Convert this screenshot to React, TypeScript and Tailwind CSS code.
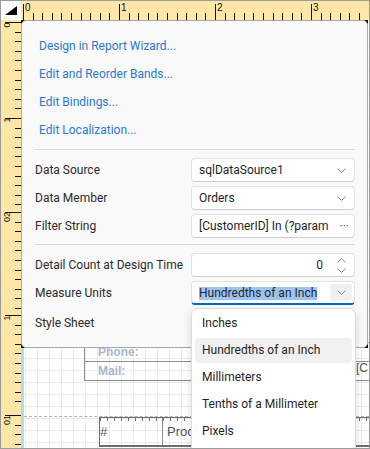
import React from "react";

const links = [
  "Design in Report Wizard...",
  "Edit and Reorder Bands...",
  "Edit Bindings...",
  "Edit Localization...",
];

const units = ["Inches", "Hundredths of an Inch", "Millimeters", "Tenths of a Millimeter", "Pixels"];

function Chevron({ up = false }: { up?: boolean }) {
  return (
    <svg width="9" height="5" viewBox="0 0 9 5" className="block">
      <path
        d={up ? "M0.5 4.5 L4.5 0.5 L8.5 4.5" : "M0.5 0.5 L4.5 4.5 L8.5 0.5"}
        fill="none"
        stroke="#8a8a8a"
        strokeWidth="1"
      />
    </svg>
  );
}

function TopRuler() {
  const ticks = Array.from({ length: 37 }, (_, i) => i);
  return (
    <svg width="348" height="19" className="block">
      {ticks.map((i) => {
        const x = Math.round(2 + i * 9.6) + 0.5;
        const major = i % 10 === 0;
        return <line key={i} x1={x} x2={x} y1={major ? 3 : 12} y2={19} stroke="#111" strokeWidth="1" />;
      })}
      {[0, 1, 2, 3].map((n) => (
        <text key={n} x={Math.round(2 + n * 96) + 2} y={9.5} fontSize="10" fontFamily="Liberation Sans, sans-serif" fill="#111">
          {n}
        </text>
      ))}
    </svg>
  );
}

function LeftRuler() {
  const majors = [
    { y: 2, label: "0", ly: 5 },
    { y: 98, label: "1", ly: 100 },
    { y: 192, label: "02", ly: 197 },
    { y: 295, label: "1", ly: 298 },
    { y: 395, label: "01", ly: 400 },
  ];
  const minors: number[] = [];
  majors.forEach((m, idx) => {
    const end = idx < majors.length - 1 ? majors[idx + 1].y - 4 : 428;
    for (let y = m.y + 9.6; y < end; y += 9.6) minors.push(Math.round(y));
  });
  return (
    <svg width="20" height="428" className="block">
      {majors.map((m) => (
        <line key={m.y} x1={4} x2={20} y1={m.y + 0.5} y2={m.y + 0.5} stroke="#111" strokeWidth="1" />
      ))}
      {minors.map((y) => (
        <line key={y} x1={14} x2={20} y1={y + 0.5} y2={y + 0.5} stroke="#111" strokeWidth="1" />
      ))}
      {majors.map((m) => (
        <text
          key={"t" + m.y}
          x={5.5}
          y={m.ly}
          fontSize="9"
          fontFamily="Liberation Sans, sans-serif"
          fill="#111"
          textAnchor="middle"
          dominantBaseline="central"
          transform={`rotate(-90 5.5 ${m.ly})`}
        >
          {m.label}
        </text>
      ))}
    </svg>
  );
}

function Row({ label, children, tall = false }: { label: string; children?: React.ReactNode; tall?: boolean }) {
  return (
    <div className={tall ? "flex h-[28px] items-center" : "flex h-[24px] items-center"}>
      <div className="w-[156px] shrink-0">{label}</div>
      {children}
    </div>
  );
}

function Combo({ value }: { value: string }) {
  return (
    <div className="flex h-[24px] w-[164px] items-center rounded-[4px] border border-[#e2e2e2] border-b-[#cdcdcd] bg-white pl-[7px] text-[#1f1f1f]">
      <span className="flex-1 truncate">{value}</span>
      <span className="mr-[8px] ml-[6px]">
        <Chevron />
      </span>
    </div>
  );
}

function Panel() {
  return (
    <div className="absolute left-0 top-0 h-[328px] w-[347px] bg-black">
      <div className="flex h-full flex-col rounded-[5px] border border-[#a9a9a9] bg-[#f9f9f9] pl-[13px] pr-[12px] pt-[11px] text-[12px] text-[#2b2b2b]">
        <div className="flex flex-col pl-[4px] text-[#2a78d6]">
          {links.map((l) => (
            <div key={l} className="h-[28px] leading-[28px]">
              {l}
            </div>
          ))}
        </div>
        <div className="mt-[5px] h-px bg-[#d9d9d9]" />
        <div className="mt-[8px] flex flex-col gap-[4px]">
          <Row label="Data Source">
            <Combo value="sqlDataSource1" />
          </Row>
          <Row label="Data Member">
            <Combo value="Orders" />
          </Row>
          <Row label="Filter String">
            <div className="flex h-[24px] w-[164px] items-center rounded-[4px] border border-[#e2e2e2] border-b-[#cdcdcd] bg-white pl-[7px] text-[#1f1f1f]">
              <span className="flex-1 overflow-hidden whitespace-nowrap">[CustomerID] In (?param</span>
              <span className="mr-[5px] ml-[4px] text-[#555] leading-none">···</span>
            </div>
          </Row>
        </div>
        <div className="mt-[6px] h-px bg-[#d9d9d9]" />
        <div className="mt-[8px] flex flex-col gap-[4px]">
          <Row label="Detail Count at Design Time">
            <div className="flex h-[24px] w-[164px] items-center rounded-[4px] border border-[#e2e2e2] border-b-[#cdcdcd] bg-white text-[#1f1f1f]">
              <span className="flex-1 text-right">0</span>
              <span className="ml-[14px] mr-[8px] flex flex-col gap-[5px]">
                <Chevron up />
                <Chevron />
              </span>
            </div>
          </Row>
          <Row label="Measure Units">
            <div className="flex h-[24px] w-[164px] items-stretch rounded-[4px] border border-[#e2e2e2] border-b-2 border-b-[#0067c0] bg-white pl-[7px] text-[#1a2740]">
              <span className="flex flex-1 items-center pt-[2px]">
                <span className="bg-[#9fc3ea] leading-[13px]">Hundredths of an Inch</span>
              </span>
              <span className="my-[2px] mr-[2px] flex w-[22px] items-center justify-center rounded-[3px] bg-[#f0f0f0]">
                <Chevron />
              </span>
            </div>
          </Row>
          <Row label="Style Sheet" tall />
        </div>
      </div>
    </div>
  );
}

function UnitList() {
  return (
    <div className="absolute left-[170px] top-[288px] h-[170px] w-[165px] rounded-t-[7px] border border-[#dcdcdc] bg-white px-[3px] pt-[2px] text-[12px] text-[#1f1f1f] shadow-[0_3px_8px_rgba(0,0,0,0.14)]">
      <div className="flex flex-col gap-[2px]">
        {units.map((u) => (
          <div
            key={u}
            className={
              u === "Hundredths of an Inch"
                ? "h-[25px] rounded-[4px] bg-[#f0f0f0] pl-[7px] leading-[25px]"
                : "h-[25px] rounded-[4px] pl-[7px] leading-[25px]"
            }
          >
            {u}
          </div>
        ))}
      </div>
    </div>
  );
}

function DesignCanvas() {
  return (
    <div className="relative flex-1 overflow-hidden bg-white bg-[linear-gradient(to_right,#ebebeb_1px,transparent_1px),linear-gradient(to_bottom,#ebebeb_1px,transparent_1px)] bg-[length:12px_12px] bg-[position:1px_2px] font-['Liberation_Sans',Arial,sans-serif]">
      {/* contact table */}
      <div className="absolute left-[60px] top-[322px] w-[330px] border border-[#8e8e8e] text-[12px]">
        <div className="flex h-[19px] border-b border-[#8e8e8e]">
          <div className="w-[270px] shrink-0 border-r border-[#8e8e8e] pl-[13px] font-bold leading-[19px] text-[#aab7cb]">Phone:</div>
          <div className="pl-[1px] leading-[19px] text-[#555]"></div>
        </div>
        <div className="flex h-[18px]">
          <div className="w-[270px] shrink-0 border-r border-[#8e8e8e] pl-[13px] font-bold leading-[18px] text-[#aab7cb]">Mail:</div>
          <div className="whitespace-nowrap pl-[1px] leading-[12px] text-[#555]">[C</div>
        </div>
      </div>
      {/* band boundary */}
      <div className="absolute left-0 right-0 top-[396px] border-t border-dashed border-[#b4b4b4]" />
      {/* detail table header */}
      <div className="absolute left-[75px] top-[397px] flex h-[30px] w-[300px] border-x border-t border-b-2 border-[#6e6e6e] text-[13px] text-[#555]">
        <div className="absolute left-0 right-0 top-0 h-[3px] bg-[repeating-linear-gradient(to_right,#6e6e6e_0px,#6e6e6e_1px,transparent_1px,transparent_7px)]" />
        <div className="flex w-[63px] shrink-0 items-center border-r border-[#8e8e8e]">#</div>
        <div className="flex items-center pl-[4px]">Proc</div>
      </div>
    </div>
  );
}

export default function App() {
  return (
    <div className="relative h-[449px] w-[370px] overflow-hidden border border-[#9b9b9b] bg-white font-['Roboto','Noto_Sans',sans-serif]">
      <div className="flex h-[19px]">
        <div className="w-[20px] shrink-0 bg-white">
          <svg width="20" height="19" className="block">
            <polygon points="4,14 16,14 16,5" fill="#000" />
          </svg>
        </div>
        <div className="flex-1 bg-[#fde6a6]">
          <TopRuler />
        </div>
      </div>
      <div className="relative flex h-[428px]">
        <div className="w-[20px] shrink-0 bg-[#fde6a6]">
          <LeftRuler />
        </div>
        <div className="relative flex flex-1">
          <div className="w-[3px] shrink-0 bg-[#b6dbea]" />
          <DesignCanvas />
          <Panel />
          <UnitList />
        </div>
      </div>
    </div>
  );
}
